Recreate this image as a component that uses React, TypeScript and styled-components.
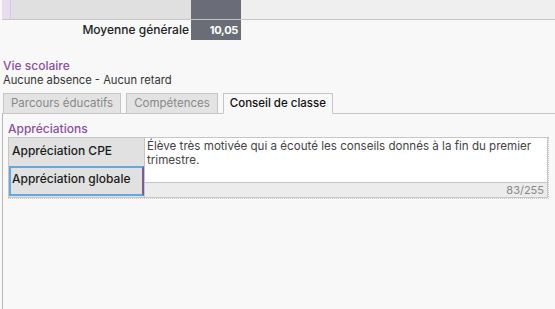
import styled, { createGlobalStyle } from "styled-components";

const GlobalStyle = createGlobalStyle`
	html, body {
		margin: 0;
		padding: 0;
		background: #f8f8f8;
		font-family: Inter, "Open Sans", sans-serif;
		font-size: 12px;
		line-height: 15px;
		color: #333;
	}
`;

const Page = styled.div`
	width: 555px;
	height: 309px;
	overflow: hidden;
	padding-left: 2px;
	box-sizing: border-box;
`;

const Grid = styled.div`
	display: grid;
	grid-template-columns: 9px 180px 50px 1fr;
	margin-bottom: 18px;
`;

const Cell = styled.div<{ $tone: "lilac" | "grey" | "dark" | "light" }>`
	height: 19px;
	background: ${({ $tone }) =>
		$tone === "lilac"
			? "#e9dcee"
			: $tone === "grey"
			? "#e0e0e0"
			: $tone === "dark"
			? "#6a6d77"
			: "#efefef"};
	border-bottom: 1px solid #c6c6c6;
	border-right: ${({ $tone }) => ($tone === "lilac" ? "1px solid #d8c8e0" : "none")};
`;

const AverageLabel = styled.div`
	grid-column: 1 / 3;
	text-align: right;
	padding-right: 2px;
	height: 20px;
	line-height: 20px;
	font-weight: 500;
	color: #222;
`;

const AverageValue = styled.div`
	height: 20px;
	line-height: 20px;
	background: #6a6d77;
	color: #fff;
	font-weight: 700;
	text-align: right;
	padding-right: 3px;
	font-size: 11px;
	letter-spacing: -0.3px;
`;

const SectionTitle = styled.div<{ $indent?: number }>`
	color: #8b4ea6;
	font-weight: 500;
	padding-left: ${({ $indent }) => $indent ?? 1}px;
`;

const Line = styled.div`
	padding-left: 1px;
	color: #333;
	font-size: 11.2px;
`;

const TabBar = styled.div`
	display: flex;
	gap: 5px;
	padding-left: 1px;
	margin-top: 5px;
	border-bottom: 1px solid #c6c6c6;
`;

const Tab = styled.div<{ $active?: boolean }>`
	height: 19px;
	line-height: 19px;
	font-size: 11.5px;
	padding: 0 ${({ $active }) => ($active ? 6 : 7)}px;
	border: 1px solid #c6c6c6;
	margin-bottom: -1px;
	background: ${({ $active }) => ($active ? "#f8f8f8" : "#e3e3e3")};
	color: ${({ $active }) => ($active ? "#111" : "#888")};
	font-weight: ${({ $active }) => ($active ? 500 : 400)};
	border-bottom: 1px solid ${({ $active }) => ($active ? "#f8f8f8" : "#c6c6c6")};
`;

const Panel = styled.div`
	border-left: 1px solid #b8b8b8;
	padding: 7px 6px 0 5px;
	height: 200px;
`;

const Table = styled.div`
	display: grid;
	grid-template-columns: 136px 1fr;
	border-right: 1px dotted #c8c8c8;
	border-bottom: 1px dotted #c8c8c8;
	margin-top: 1px;
`;

const LabelColumn = styled.div`
	display: flex;
	flex-direction: column;
	background: #e1e1e1;
	border: 1px solid #c6c6c6;
	border-right: none;
`;

const Label = styled.div<{ $focused?: boolean }>`
	height: ${({ $focused }) => ($focused ? 30 : 28)}px;
	padding: 3px 1px 0;
	font-weight: 500;
	color: #1a1a1a;
	border: 2px solid ${({ $focused }) => ($focused ? "#5ea9e6" : "transparent")};
	border-right-color: ${({ $focused }) => ($focused ? "#7a5a96" : "transparent")};
	box-sizing: border-box;
	line-height: 16px;
`;

const Editor = styled.div`
	display: flex;
	flex-direction: column;
`;

const TextBox = styled.div`
	height: 46px;
	box-sizing: border-box;
	background: #fff;
	border: 1px solid #c6c6c6;
	padding: 1px 2px;
	line-height: 14px;
	color: #444;
	font-size: 11.6px;
`;

const Counter = styled.div`
	height: 14px;
	line-height: 14px;
	background: #ececec;
	border: 1px solid #c6c6c6;
	border-top: none;
	text-align: right;
	padding-right: 3px;
	color: #888;
	font-size: 11px;
`;

export default function App() {
	return (
		<>
			<GlobalStyle />
			<Page>
				<Grid>
					<Cell $tone="lilac" />
					<Cell $tone="grey" />
					<Cell $tone="dark" />
					<Cell $tone="light" />
					<AverageLabel>Moyenne générale</AverageLabel>
					<AverageValue>10,05</AverageValue>
				</Grid>
				<SectionTitle>Vie scolaire</SectionTitle>
				<Line>Aucune absence - Aucun retard</Line>
				<TabBar>
					<Tab>Parcours éducatifs</Tab>
					<Tab>Compétences</Tab>
					<Tab $active>Conseil de classe</Tab>
				</TabBar>
				<Panel>
					<SectionTitle $indent={0}>Appréciations</SectionTitle>
					<Table>
						<LabelColumn>
							<Label>Appréciation CPE</Label>
							<Label $focused>Appréciation globale</Label>
						</LabelColumn>
						<Editor>
							<TextBox>
								Élève très motivée qui a écouté les conseils donnés à la fin du premier
								trimestre.
							</TextBox>
							<Counter>83/255</Counter>
						</Editor>
					</Table>
				</Panel>
			</Page>
		</>
	);
}
